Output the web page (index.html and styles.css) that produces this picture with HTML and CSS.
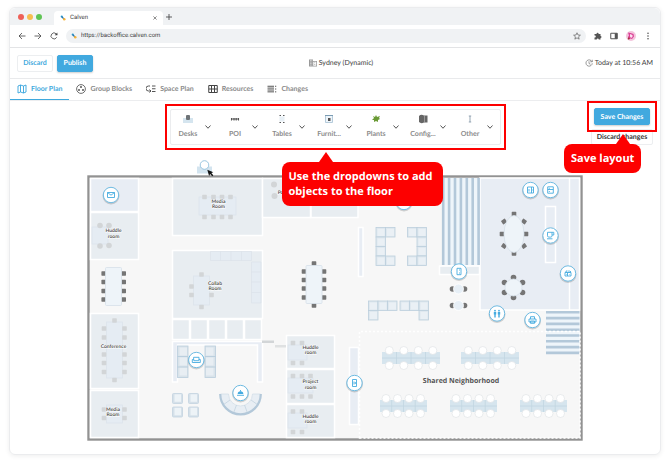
FILE: index.html
```html
<!DOCTYPE html>
<html lang="en">
<head>
<meta charset="utf-8">
<meta name="viewport" content="width=device-width, initial-scale=1">
<title>Calven</title>
<link rel="stylesheet" href="styles.css">
</head>
<body>
<svg class="sprite" aria-hidden="true">
  <defs>
    <symbol id="logo" viewBox="0 0 12 12"><circle cx="3.5" cy="3" r="2.2" fill="#2fa4dc"/><path d="M3 3l5 5" stroke="#2876a8" stroke-width="2.4"/><circle cx="8.5" cy="8.5" r="2.5" fill="#f6b43c"/></symbol>
    <symbol id="chevron" viewBox="0 0 12 12"><path d="M1 3L6 8.500 11 3" fill="none" stroke="#555" stroke-width="2"/></symbol>
  </defs>
</svg>
<div class="window">
  <div class="tabstrip">
    <div class="lights"><span class="light red"></span><span class="light amber"></span><span class="light green"></span></div>
    <div class="browser-tab">
      <svg class="icon-s"><use href="#logo"/></svg>
      <span class="browser-tab-title">Calven</span>
      <button class="plain" aria-label="Close tab"><svg class="icon-xs" viewBox="0 0 10 10"><path d="M1 1l8 8M9 1l-8 8" stroke="#444" stroke-width="1.5"/></svg></button>
    </div>
    <button class="plain new-tab" aria-label="New tab"><svg class="icon-s" viewBox="0 0 12 12"><path d="M6 0v12M0 6h12" stroke="#444" stroke-width="1.7"/></svg></button>
  </div>

  <div class="addressbar">
    <button class="plain" aria-label="Back"><svg class="icon-m" viewBox="0 0 16 16"><path d="M15 8H2M8 2L2 8l6 6" fill="none" stroke="#444" stroke-width="1.6"/></svg></button>
    <button class="plain" aria-label="Forward"><svg class="icon-m" viewBox="0 0 16 16"><path d="M1 8h13M8 2l6 6-6 6" fill="none" stroke="#444" stroke-width="1.6"/></svg></button>
    <button class="plain" aria-label="Reload"><svg class="icon-m" viewBox="0 0 16 16"><path d="M13.5 10.5A6 6 0 1 1 12.4 3.6L14 5.5" fill="none" stroke="#444" stroke-width="1.6"/><path d="M14.8 1v5.5H9.3z" fill="#444"/></svg></button>
    <div class="url">
      <svg class="icon-s"><use href="#logo"/></svg>
      <input class="url-input" type="text" value="https://backoffice.calven.com" aria-label="Address">
      <svg class="icon-m" viewBox="0 0 16 16"><path d="M8 1.5l2 4.5 4.800.4-3.700 3.200 1.200 4.700L8 11.700l-4.300 2.600 1.200-4.700L1.200 6.400 6 6z" fill="none" stroke="#555" stroke-width="1.3"/></svg>
    </div>
    <svg class="icon-m" viewBox="0 0 16 16"><path d="M1 4h4.200a2 2 0 1 1 3.900 0H13v4a2 2 0 1 1 0 4v3H9.500a2 2 0 1 0-4 0H1v-4a2 2 0 1 0 0-3.800z" fill="#555"/></svg>
    <svg class="icon-m" viewBox="0 0 16 16"><path d="M1.500 2.500h13v11h-13z" fill="none" stroke="#555" stroke-width="2"/><path d="M9.500 2.500h5v11h-5z" fill="#555"/></svg>
    <svg class="avatar" viewBox="0 0 20 20"><circle cx="10" cy="10" r="10" fill="#f3c4dc"/><path d="M4 3l5 1 6 2 1 5-4 5-3-1-4 2-1-5 2-3z" fill="#dc3f96"/><path d="M8 6l5 2v4l-3 2-2-3z" fill="#f9e3ee"/><circle cx="5.500" cy="15" r="2" fill="#a33a3a"/></svg>
    <svg class="icon-m" viewBox="0 0 16 16" fill="#444"><circle cx="8" cy="2.500" r="1.500"/><circle cx="8" cy="8" r="1.500"/><circle cx="8" cy="13.500" r="1.500"/></svg>
  </div>

  <header class="page-head">
    <div class="head-left">
      <button class="btn outline">Discard</button>
      <button class="btn primary">Publish</button>
    </div>
    <div class="head-item head-place">
      <svg class="icon-m" viewBox="0 0 16 16"><path d="M0 1h8v3h8v11H0z" fill="#999"/><path d="M2 3.200h1.500M5 3.200h1.500M2 6.200h1.500M5 6.200h1.500M2 9.200h1.500M5 9.200h1.500M2 12.200h1.500M5 12.200h1.500" stroke="#fff" stroke-width="1.400"/><path d="M8.500 5.500h6v8h-6z" fill="#fff"/><path d="M10.500 7.500h2M10.500 11h2" stroke="#999" stroke-width="1.500"/></svg>
      <span>Sydney (Dynamic)</span>
    </div>
    <div class="head-item head-right">
      <svg class="icon-m" viewBox="0 0 16 16"><path d="M14.500 8.500A6.300 6.300 0 1 1 12 3l2.500 2.500M14.500 1.500v4h-4M8 4.500V9l3 1.500" fill="none" stroke="#666" stroke-width="1.300"/></svg>
      <span>Today at 10:56 AM</span>
    </div>
  </header>

  <nav class="tabs">
    <a class="tab active" href="#floor-plan"><svg class="icon-l" viewBox="0 0 20 20"><path d="M2 4l5-2 6 2 5-2v14l-5 2-6-2-5 2zM7 2v14M13 4v14" fill="none" stroke="#35a4dc" stroke-width="1.800"/></svg>Floor Plan</a>
    <a class="tab" href="#group-blocks"><svg class="icon-l" viewBox="0 0 20 20"><circle cx="10" cy="10" r="8.800" fill="none" stroke="#555" stroke-width="1.700"/><circle cx="10" cy="6" r="2" fill="#555"/><circle cx="6" cy="12" r="2" fill="#555"/><circle cx="14" cy="12" r="2" fill="#555"/></svg>Group Blocks</a>
    <a class="tab" href="#space-plan"><svg class="icon-l" viewBox="0 0 20 20"><path d="M8 4H5a4 4 0 0 0 0 10h4M7 11l3 3-3 3M12 4h7M12 9.500h7M12 15h7" fill="none" stroke="#555" stroke-width="2"/></svg>Space Plan</a>
    <a class="tab" href="#resources"><svg class="icon-l" viewBox="0 0 20 20"><path d="M1.500 3h17v14h-17zM7 3v14M13 3v14M1.500 10h17" fill="none" stroke="#444" stroke-width="2"/></svg>Resources</a>
    <a class="tab" href="#changes"><svg class="icon-l" viewBox="0 0 20 20"><path d="M1 4.500h13M1 8.200h13M1 12h13M1 15.700h13M16 4.500h2.500M16 10h2.500M16 15.700h2.500" stroke="#555" stroke-width="2"/></svg>Changes</a>
  </nav>

  <main class="canvas">
    <div class="toolrow">
      <div class="highlight palette-mark">
        <div class="palette">
          <button class="tool"><svg class="tool-icon" viewBox="0 0 12 12"><path d="M1 5h10v5H1z" fill="#d5e5ef"/><rect x="4" y="2" width="4" height="5" rx="1" fill="#6f7478"/></svg><span class="tool-label">Desks</span><svg class="caret"><use href="#chevron"/></svg></button>
          <button class="tool"><svg class="tool-icon" viewBox="0 0 12 12"><path d="M2.500 5v2.500M2 6h8M9.500 5v2.500M5 5v2.500M7.200 5v2.500" stroke="#555" stroke-width="1.100"/></svg><span class="tool-label">POI</span><svg class="caret"><use href="#chevron"/></svg></button>
          <button class="tool"><svg class="tool-icon" viewBox="0 0 12 12"><rect x="3.500" y="3.500" width="5" height="5" fill="#e8f0f6"/><path d="M3.500 2.500h1.500M7 2.500h1.500M3.500 9.500h1.500M7 9.500h1.500" stroke="#555" stroke-width="1.200"/></svg><span class="tool-label">Tables</span><svg class="caret"><use href="#chevron"/></svg></button>
          <button class="tool"><svg class="tool-icon" viewBox="0 0 12 12"><path d="M2.500 2.500h7v7h-7z" fill="#eef5fa" stroke="#b5cbdb"/><path d="M2 2.500h8" stroke="#7c9db4"/><rect x="5" y="5" width="2.500" height="3" fill="#555"/></svg><span class="tool-label">Furnit...</span><svg class="caret"><use href="#chevron"/></svg></button>
          <button class="tool"><svg class="tool-icon" viewBox="0 0 12 12"><path d="M3 3l2 1 1-2 1 2 3-1-1 2 1 1-2 1v2L6 8 4 9V7L2 7l2-2z" fill="#6a9a35"/></svg><span class="tool-label">Plants</span><svg class="caret"><use href="#chevron"/></svg></button>
          <button class="tool"><svg class="tool-icon" viewBox="0 0 12 12"><path d="M2 3q2-2 5-.5h3.500v7H7q-3 1.500-5-.5z" fill="#666"/><path d="M7.500 3v6" stroke="#999"/></svg><span class="tool-label">Config...</span><svg class="caret"><use href="#chevron"/></svg></button>
          <button class="tool"><svg class="tool-icon" viewBox="0 0 12 12"><path d="M6 3v6M4.800 3h2.400M4.800 9h2.400" stroke="#7f93a3" stroke-width=".8"/></svg><span class="tool-label">Other</span><svg class="caret"><use href="#chevron"/></svg></button>
        </div>
        <div class="callout callout-palette">Use the dropdowns to add<br>objects to the floor</div>
      </div>
      <div class="actions">
        <div class="highlight save-mark">
          <button class="btn primary">Save Changes</button>
          <div class="callout callout-save">Save layout</div>
        </div>
        <button class="btn discard-changes">Discard changes</button>
      </div>
    </div>

    <svg class="plan" viewBox="87 150 496 292" role="img" aria-label="Floor plan">
      <defs>
        <g id="cell"><rect width="9.500" height="9.500" fill="#dfe8ef" stroke="#bccfdd" stroke-width=".8"/><rect x="1.500" y="1.500" width="7" height="7" fill="#eaf0f5"/></g>
        <g id="armchair"><rect width="10" height="10" rx="1" fill="#d5e0e9" stroke="#c3d3df" stroke-width=".8"/><rect x="2" y=".8" width="6.500" height="7.500" fill="#edf3f7"/></g>
        <g id="couch"><rect width="10.500" height="31.500" fill="#d9e3ea" stroke="#b9cddc" stroke-width=".8"/><path d="M2 1.500h7.500v8H2zM2 11.500h7.500v8H2zM2 21.500h7.500v8H2z" fill="#e8eef3"/><path d="M0 10.500h10.500M0 21h10.500" stroke="#b4cadb" stroke-width=".8"/></g>
        <g id="seat"><rect x="-2.300" y="-2.200" width="4.600" height="4.400" rx=".6"/></g>
        <g id="bank"><rect width="58" height="12" fill="#d6e5ee"/><path d="M0 6h58M14.500 0v12M29 0v12M43.500 0v12" stroke="#c2d5e1" stroke-width=".8"/><g fill="#fff" stroke="#dcdfe2" stroke-width=".6"><circle cx="7.300" cy="-1.500" r="4"/><circle cx="21.800" cy="-1.500" r="4"/><circle cx="36.300" cy="-1.500" r="4"/><circle cx="50.800" cy="-1.500" r="4"/><circle cx="7.300" cy="13.500" r="4"/><circle cx="21.800" cy="13.500" r="4"/><circle cx="36.300" cy="13.500" r="4"/><circle cx="50.800" cy="13.500" r="4"/></g></g>
        <g id="bank-s"><rect width="47" height="12" fill="#d6e5ee"/><path d="M0 6h47M11.700 0v12M23.500 0v12M35.200 0v12" stroke="#c2d5e1" stroke-width=".8"/><g fill="#fff" stroke="#dcdfe2" stroke-width=".6"><circle cx="6" cy="-1.500" r="4"/><circle cx="17.500" cy="-1.500" r="4"/><circle cx="29" cy="-1.500" r="4"/><circle cx="40.500" cy="-1.500" r="4"/><circle cx="6" cy="13.500" r="4"/><circle cx="17.500" cy="13.500" r="4"/><circle cx="29" cy="13.500" r="4"/><circle cx="40.500" cy="13.500" r="4"/></g></g>
        <g id="pin"><circle cy="1" r="8.500" fill="#000" opacity=".16"/><circle r="7.700" fill="#fff" stroke="#6fbbe2" stroke-width="1"/></g>
        <g id="cafe"><circle cx="-6" r="2.800"/><circle cx="6" r="2.800"/><circle r="5" fill="#e7eff6" stroke="#fff" stroke-width=".8"/></g>
      </defs>

      <rect x="88.500" y="176.500" width="493" height="263" fill="#f7f7f7" stroke="#929292" stroke-width="2.400"/>

      <g class="room">
        <rect x="90.500" y="178.500" width="48" height="33" class="lav"/>
        <rect x="90.500" y="212.500" width="48" height="47"/>
        <rect x="90.500" y="313.500" width="48" height="75"/>
        <rect x="90.500" y="390.500" width="48" height="47"/>
        <rect x="172.500" y="178.500" width="90" height="57"/>
        <rect x="172.500" y="250.500" width="90" height="68"/>
        <rect x="172.500" y="319.500" width="17" height="20"/><rect x="190.500" y="319.500" width="17" height="20"/><rect x="208.500" y="319.500" width="17" height="20"/><rect x="226.500" y="319.500" width="17" height="20"/><rect x="244.500" y="319.500" width="17" height="20"/>
        <rect x="262.500" y="178.500" width="48" height="39"/><rect x="311" y="178.500" width="47" height="39"/>
        <rect x="286.500" y="335.500" width="48" height="33"/><rect x="286.500" y="369.500" width="48" height="34"/><rect x="286.500" y="404.500" width="48" height="33"/>
        <rect x="480" y="178" width="99.500" height="132" class="lav"/>
        <rect x="358.500" y="227.500" width="4.500" height="49" class="lav"/>
        <rect x="349.500" y="347.500" width="9" height="77" class="lav"/>
        <rect x="545.500" y="206.500" width="10" height="56" class="lav"/>
        <path d="M172.500 341.500h90v40.500h-5v-37h-80v37h-5z" class="lav"/>
        <rect x="439.500" y="266" width="40" height="8.500"/>
        <path d="M569.500 178v132"/>
      </g>
      <rect x="442" y="178" width="38" height="87" fill="#eef5fa"/>
      <path d="M443.200 178v87M449.100 178v87M455 178v87M460.900 178v87M466.800 178v87M472.700 178v87M478.600 178v87" stroke="#b3c8d9" stroke-width="2.600"/>
      <rect x="546" y="311" width="33.500" height="43" fill="#eef5fa"/>
      <path d="M546 312.300h33.500M546 318.100h33.500M546 323.900h33.500M546 329.700h33.500M546 335.500h33.500M546 341.300h33.500M546 347.100h33.500M546 352.900h33.500" stroke="#b3c8d9" stroke-width="2.600"/>

      <g fill="#e5ecf3" stroke="#dbe3ea" stroke-width=".7">
        <path d="M210.500 251.500h41v9h-41zM220.500 251.500v9M231 251.500v9M241.500 251.500v9M251.500 262h9.500v41h-9.500zM251.500 272h9.500M251.500 282h9.500M251.500 292.500h9.500"/>
        <rect x="199" y="197" width="37" height="18"/><rect x="193.500" y="276" width="16" height="29"/><rect x="106.500" y="322" width="16" height="56"/>
        <rect x="92" y="227" width="16" height="17"/><rect x="106.500" y="405" width="16" height="18"/>
        <rect x="288" y="345" width="19" height="15"/><rect x="288" y="378" width="25" height="15"/><rect x="288" y="413" width="19" height="15"/>
      </g>
      <g fill="#d2d5d7">
        <use href="#seat" x="204.500" y="197"/><use href="#seat" x="213.500" y="197"/><use href="#seat" x="222" y="197"/><use href="#seat" x="230.500" y="197"/>
        <use href="#seat" x="204.500" y="217"/><use href="#seat" x="213.500" y="217"/><use href="#seat" x="222" y="217"/><use href="#seat" x="230.500" y="217"/>
        <use href="#seat" x="201.500" y="274.500"/><use href="#seat" x="191.500" y="286.500"/><use href="#seat" x="191.500" y="295"/><use href="#seat" x="211.500" y="295"/><use href="#seat" x="201.500" y="307"/>
        <circle cx="100" cy="225.500" r="2.800"/><circle cx="109" cy="225.500" r="2.800"/><circle cx="100" cy="246" r="2.800"/><circle cx="109" cy="245.500" r="2.800"/>
        <use href="#seat" x="114.500" y="320.500"/><use href="#seat" x="104" y="328.500"/><use href="#seat" x="124.500" y="328.500"/><use href="#seat" x="104" y="337.500"/><use href="#seat" x="124.500" y="337.500"/><use href="#seat" x="104" y="354.500"/><use href="#seat" x="124.500" y="354.500"/><use href="#seat" x="104" y="363"/><use href="#seat" x="124.500" y="363"/><use href="#seat" x="104" y="372"/><use href="#seat" x="124.500" y="372"/><use href="#seat" x="114.500" y="380"/>
        <use href="#seat" x="104" y="409.500"/><use href="#seat" x="124.500" y="409.500"/><use href="#seat" x="104" y="418"/><use href="#seat" x="124.500" y="418"/>
        <use href="#seat" x="293" y="343"/><use href="#seat" x="302" y="343"/><use href="#seat" x="293" y="363"/><use href="#seat" x="302" y="363"/>
        <use href="#seat" x="293" y="376"/><use href="#seat" x="302" y="376"/><use href="#seat" x="310.500" y="376"/><use href="#seat" x="293" y="396.500"/><use href="#seat" x="302" y="396.500"/><use href="#seat" x="310.500" y="396.500"/>
        <use href="#seat" x="293" y="411.500"/><use href="#seat" x="302" y="411.500"/><use href="#seat" x="293" y="432"/><use href="#seat" x="302" y="432"/>
        <circle cx="274" cy="184.500" r="3"/><circle cx="274.500" cy="196" r="3"/>
        <rect x="262" y="340.500" width="12" height="2.500"/><rect x="275" y="345" width="11" height="2.500" fill="#dfe1e2"/>
      </g>

      <g fill="#757575">
        <use href="#seat" x="103.700" y="273.500"/><use href="#seat" x="103.700" y="282"/><use href="#seat" x="103.700" y="291"/><use href="#seat" x="103.700" y="299.500"/><use href="#seat" x="123.700" y="273.500"/><use href="#seat" x="123.700" y="282"/><use href="#seat" x="123.700" y="291"/><use href="#seat" x="123.700" y="299.500"/>
        <use href="#seat" x="304" y="271.500"/><use href="#seat" x="304" y="280"/><use href="#seat" x="304" y="288.500"/><use href="#seat" x="304" y="297.500"/><use href="#seat" x="324" y="271.500"/><use href="#seat" x="324" y="280"/><use href="#seat" x="324" y="288.500"/><use href="#seat" x="324" y="297.500"/><use href="#seat" x="314" y="263.500"/><use href="#seat" x="314" y="305.500"/>
        <use href="#seat" x="514" y="214"/><use href="#seat" x="514" y="253.500"/><use href="#seat" x="502" y="234"/><use href="#seat" x="526" y="234"/>
        <use href="#seat" transform="translate(504 221.500) rotate(-35)"/><use href="#seat" transform="translate(524 221.500) rotate(35)"/><use href="#seat" transform="translate(504 246) rotate(35)"/><use href="#seat" transform="translate(524 246) rotate(-35)"/>
        <circle cx="513.500" cy="277.500" r="2.800"/><circle cx="504.500" cy="282.500" r="2.800"/><circle cx="522.500" cy="282.500" r="2.800"/><circle cx="504.500" cy="292.500" r="2.800"/><circle cx="522.500" cy="292.500" r="2.800"/><circle cx="513.500" cy="297.500" r="2.800"/>
        <use href="#cafe" x="458.500" y="289"/><use href="#cafe" x="458.500" y="305.500"/>
      </g>
      <g fill="#eef4f9" stroke="#d5e0e8" stroke-width=".8">
        <rect x="105.500" y="267.500" width="16" height="38" rx="1"/><rect x="306" y="265.500" width="16" height="38" rx="1"/>
        <ellipse cx="514" cy="234" rx="10" ry="18.500"/><circle cx="513.500" cy="287.500" r="8.500"/>
      </g>

      <use href="#cell" x="376" y="227.500"/><use href="#cell" x="385.500" y="227.500"/><use href="#cell" x="376" y="237"/><use href="#cell" x="376" y="246.500"/><use href="#cell" x="376" y="256"/><use href="#cell" x="385.500" y="256"/>
      <use href="#cell" x="407.500" y="227.500"/><use href="#cell" x="417" y="227.500"/><use href="#cell" x="417" y="237"/><use href="#cell" x="417" y="246.500"/><use href="#cell" x="407.500" y="256"/><use href="#cell" x="417" y="256"/>
      <use href="#cell" x="368.500" y="301"/><use href="#cell" x="378" y="301"/><use href="#cell" x="387.500" y="301"/><use href="#cell" x="368.500" y="310.500"/>
      <use href="#cell" x="400" y="301"/><use href="#cell" x="409.500" y="301"/><use href="#cell" x="419" y="301"/><use href="#cell" x="419" y="310.500"/>
      <use href="#couch" x="177.500" y="346"/><use href="#couch" transform="translate(215.500 346) scale(-1 1)"/>
      <use href="#armchair" x="172.500" y="393.500"/><use href="#armchair" x="188.500" y="393.500"/><use href="#armchair" x="172.500" y="407"/><use href="#armchair" x="188.500" y="407"/>
      <path d="M220.500 394a20 20 0 0 0 40 0h-8a12 12 0 0 1-24 0z" fill="#e8eef4" stroke="#d3dee8" stroke-width=".8"/>
      <path d="M230 400l-7 5M236.500 405l-3 8M244.500 405l3 8M251 400l7 5" stroke="#c3d3df" stroke-width=".8"/>
      <path d="M220.200 394a20.300 20.300 0 0 0 40.600 0" fill="none" stroke="#b3c8d9" stroke-width="2.200"/>

      <path d="M359.500 438V331.500H580V438z" fill="none" stroke="#fff" stroke-width="1.500" stroke-dasharray="2 2"/>
      <use href="#bank" x="382" y="352"/><use href="#bank" x="461" y="352"/>
      <use href="#bank-s" x="380" y="400"/><use href="#bank-s" x="450" y="400"/><use href="#bank-s" x="520" y="400"/>

      <g class="room-label">
        <text x="218.500" y="203">Media</text><text x="218.500" y="208">Room</text>
        <text x="215" y="285">Collab</text><text x="215" y="290">Room</text>
        <text x="113.500" y="232">Huddle</text><text x="113.500" y="238">room</text>
        <text x="113.500" y="348">Conference</text>
        <text x="113" y="411">Media</text><text x="113" y="416">Room</text>
        <text x="310.500" y="349">Huddle</text><text x="310.500" y="354">room</text>
        <text x="310.500" y="383">Project</text><text x="310.500" y="389">room</text>
        <text x="310.500" y="418">Huddle</text><text x="310.500" y="423">room</text>
        <text x="282" y="194">Pod</text>
      </g>
      <text class="zone-label" x="461" y="383">Shared Neighborhood</text>

      <g class="pins">
        <g transform="translate(111 195)"><use href="#pin"/><path d="M-3.500-2.500h7v5h-7zM-3.500-2.500L0 .2l3.500-2.700"/></g>
        <g transform="translate(404 202)"><use href="#pin"/></g>
        <g transform="translate(530.500 190)"><use href="#pin"/><path d="M-3-3h6v6h-6zM1-3v6M-1.500-1v2.500M1.800 0h1"/></g>
        <g transform="translate(550.500 190)"><use href="#pin"/><path d="M-2.800-3.200h5.600v6.400h-5.600zM-2.800-.5h5.600M-1.200-2.200v1M-1.200 1v1"/></g>
        <g transform="translate(550.500 235.500)"><use href="#pin"/><path d="M-3-3.200h6.300v2.700H1.500M-3-3.200v3.500q0 1.300 1.300 1.300h2q1.200 0 1.200-1.300v-3.500M-3.500 3.300h5.500"/></g>
        <g transform="translate(568 273.500)"><use href="#pin"/><path d="M-3-1h6v3.500h-6zM-.5-1v3.500M-2-1v-1.500h1.500M1-1v-2.200M2.500-1v-1.500M-2 1h.5M1 1h.5"/></g>
        <g transform="translate(459 271.500)"><use href="#pin"/><path d="M-2-3.200h4v6.400h-4zM0-1.500h1M0 1.500h1"/></g>
        <g transform="translate(497 313.500)"><use href="#pin"/><path class="solid" d="M-3.200-1.500h2.400v2.500h-.5v3h-1.400v-3h-.5zM.8-1.500h2.400v2.500h-.5v3H1.300v-3H.8z"/><circle class="solid" cx="-2" cy="-2.800" r=".9"/><circle class="solid" cx="2" cy="-2.800" r=".9"/></g>
        <g transform="translate(532.500 320)"><use href="#pin"/><path d="M-2-1v-2.300h4v2.300M-3.500-1h7v3h-7zM-2 1h4v2.300h-4z"/></g>
        <g transform="translate(354.500 383)"><use href="#pin"/><path d="M-2-3.500h4v7h-4zM-.5-1.500v3M.8-1v2"/></g>
        <g transform="translate(196.300 360)"><use href="#pin"/><path d="M-2.700-.5v-2.200h5.400v2.200M-4-.5h1.500v1.200h5v-1.200H4v3h-8z"/></g>
        <g transform="translate(240.500 393)"><use href="#pin"/><path class="solid" d="M-2.800 1a2.800 2.800 0 0 1 5.600 0z"/><path d="M-3.500 2.300h7M0-3v1.500"/></g>
      </g>

      <rect x="197" y="166.500" width="15" height="7" fill="#d3e4ef"/>
      <circle cx="204.500" cy="165" r="4.300" fill="#fff" stroke="#8fbfdd" stroke-width=".9"/>
      <path d="M207.300 169.800l6 2.500-2 .8 2 2.200-1 1-2.200-2.200-1 1.900z" fill="#111"/>
    </svg>
  </main>
</div>
</body>
</html>
```

FILE: styles.css
```css
* { box-sizing: border-box; }

body {
  margin: 0;
  padding: 7px 9px 11px;
  background: #fff;
  color: #3c3c3c;
  font-family: Lato, "Open Sans", sans-serif;
  font-size: 7px;
  line-height: 10px;
  text-rendering: geometricPrecision;
}

button, input { font: inherit; color: inherit; margin: 0; text-rendering: inherit; }
.sprite { position: absolute; width: 0; height: 0; }
.plain { display: flex; padding: 0; border: 0; background: none; }
.icon-xs { width: 4px; height: 4px; }
.icon-s { width: 6px; height: 6px; flex: none; }
.icon-m { width: 8px; height: 8px; flex: none; }
.icon-l { width: 10px; height: 10px; flex: none; }

.window {
  display: flex;
  flex-direction: column;
  min-height: calc(100vh - 18px);
  border: 1px solid #ebecee;
  border-radius: 6px;
  box-shadow: 0 1px 5px rgba(0, 0, 0, .07);
}

/* Browser frame */
.tabstrip {
  display: flex;
  align-items: center;
  height: 17px;
  padding-left: 8px;
  background: #f0f2f4;
  border-radius: 6px 6px 0 0;
}
.lights { display: flex; gap: 3px; width: 36px; }
.light { width: 6px; height: 6px; border-radius: 50%; }
.red { background: #ee6058; }
.amber { background: #f6be4f; }
.green { background: #5fc454; }
.browser-tab {
  display: flex;
  align-items: center;
  align-self: flex-end;
  gap: 4px;
  width: 109px;
  height: 14px;
  padding: 0 6px;
  background: #fff;
  border-radius: 4px 4px 0 0;
  font-family: Roboto, sans-serif;
  font-size: 6px;
}
.browser-tab-title { flex: 1; }
.new-tab { margin-left: 3px; }
.addressbar {
  display: flex;
  align-items: center;
  gap: 8px;
  height: 23px;
  padding: 0 8px;
  border-bottom: 1px solid #e3e4e6;
}
.url {
  display: flex;
  align-items: center;
  gap: 4px;
  flex: 1;
  height: 14px;
  padding: 0 5px;
  border-radius: 7px;
  background: #f0f2f4;
}
.url-input {
  flex: 1;
  min-width: 0;
  padding: 0;
  border: 0;
  background: none;
  font-family: Roboto, sans-serif;
  font-size: 6px;
}
.avatar { width: 10px; height: 10px; }

/* Page header */
.page-head {
  display: grid;
  grid-template-columns: 1fr auto 1fr;
  align-items: center;
  height: 31px;
  padding: 0 7px;
  border-bottom: 1px solid #e9eaec;
}
.head-left { display: flex; gap: 4px; }
.head-item { display: flex; align-items: center; gap: 2px; }
.head-place { padding-left: 12px; }
.head-right { justify-content: flex-end; }
.btn {
  height: 17px;
  padding: 0 7px;
  border: 1px solid #eceef0;
  border-radius: 2px;
  background: #fff;
  font-weight: 700;
  white-space: nowrap;
}
.head-left .btn { width: 36px; padding: 0; }
.outline { color: #3fa9dd; }
.primary {
  background: #41a9df;
  border-color: #41a9df;
  color: #fff;
  box-shadow: 0 1px 2px rgba(0, 0, 0, .2);
}
.tabs {
  display: flex;
  height: 22px;
  border-bottom: 1px solid #ecedef;
}
.tab {
  display: flex;
  align-items: center;
  gap: 4px;
  padding: 0 7px;
  border-bottom: 1px solid transparent;
  color: #8b8b8b;
  font-weight: 700;
  text-decoration: none;
}
.active { color: #3fa9dd; border-bottom-color: #3fa9dd; }

/* Editor canvas */
.canvas {
  display: flex;
  flex-direction: column;
  align-items: center;
  flex: 1;
  padding-bottom: 12px;
}
.toolrow {
  display: grid;
  grid-template-columns: 1fr auto 1fr;
  align-self: stretch;
  align-items: start;
  height: 49px;
}
.highlight { position: relative; border: 2px solid #fd0000; }
.palette-mark { grid-column: 2; margin-top: 3px; padding: 3px; }
.palette {
  display: flex;
  height: 36px;
  border: 1px solid #ebecee;
  border-radius: 2px;
}
.tool {
  display: grid;
  grid-template-columns: 33px 6px;
  grid-template-rows: 12px 4px 10px;
  align-content: start;
  justify-items: center;
  align-items: center;
  width: 47px;
  padding: 3px 0 0 1px;
  border: 0;
  background: none;
  color: #8b8b8b;
  font-weight: 700;
}
.tool-icon { grid-area: 1 / 1; width: 12px; height: 12px; }
.tool-label { grid-area: 3 / 1; }
.caret { grid-area: 2 / 2; width: 6px; height: 6px; }
.actions {
  grid-column: 3;
  justify-self: end;
  display: flex;
  flex-direction: column;
  align-items: center;
  margin-right: 3px;
}
.save-mark { z-index: 2; padding: 5px; }
.save-mark .btn { display: block; width: 56px; padding: 0; }
.discard-changes {
  width: 62px;
  height: 16px;
  margin-top: -3px;
  padding: 0;
  color: #333;
}

.callout {
  position: absolute;
  z-index: 3;
  background: #fd0000;
  color: #fff;
  font-family: "Open Sans", sans-serif;
  font-weight: 700;
  font-size: 11px;
  line-height: 15px;
  white-space: nowrap;
}
.callout::before {
  content: "";
  position: absolute;
  bottom: 100%;
  border: solid transparent;
  border-width: 0 7px 10px;
  border-bottom-color: #fd0000;
}
.callout-palette {
  top: 56px;
  left: 115px;
  padding: 7px;
  width: 161px;
  border-radius: 8px;
}
.callout-palette::before { left: 37px; }
.callout-save {
  top: 41px;
  right: 14px;
  padding: 7px;
  width: 77px;
  border-radius: 8px;
  text-align: center;
}
.callout-save::before { right: 11px; }

/* Floor plan drawing */
.plan { display: block; width: 100%; max-width: 496px; }
.room { fill: #e8edf1; stroke: #fff; stroke-width: 1.5; }
.lav { fill: #e8edf4; }
.room-label {
  font-size: 5px;
  font-weight: 700;
  text-anchor: middle;
  fill: #555;
  paint-order: stroke;
  stroke: #fff;
  stroke-width: 1;
}
.zone-label {
  font-family: "Open Sans", sans-serif;
  font-size: 7px;
  font-weight: 700;
  text-anchor: middle;
  fill: #555;
}
.pins path { fill: none; stroke: #45abe0; stroke-width: .9; }
.pins .solid { fill: #45abe0; stroke: none; }
```
